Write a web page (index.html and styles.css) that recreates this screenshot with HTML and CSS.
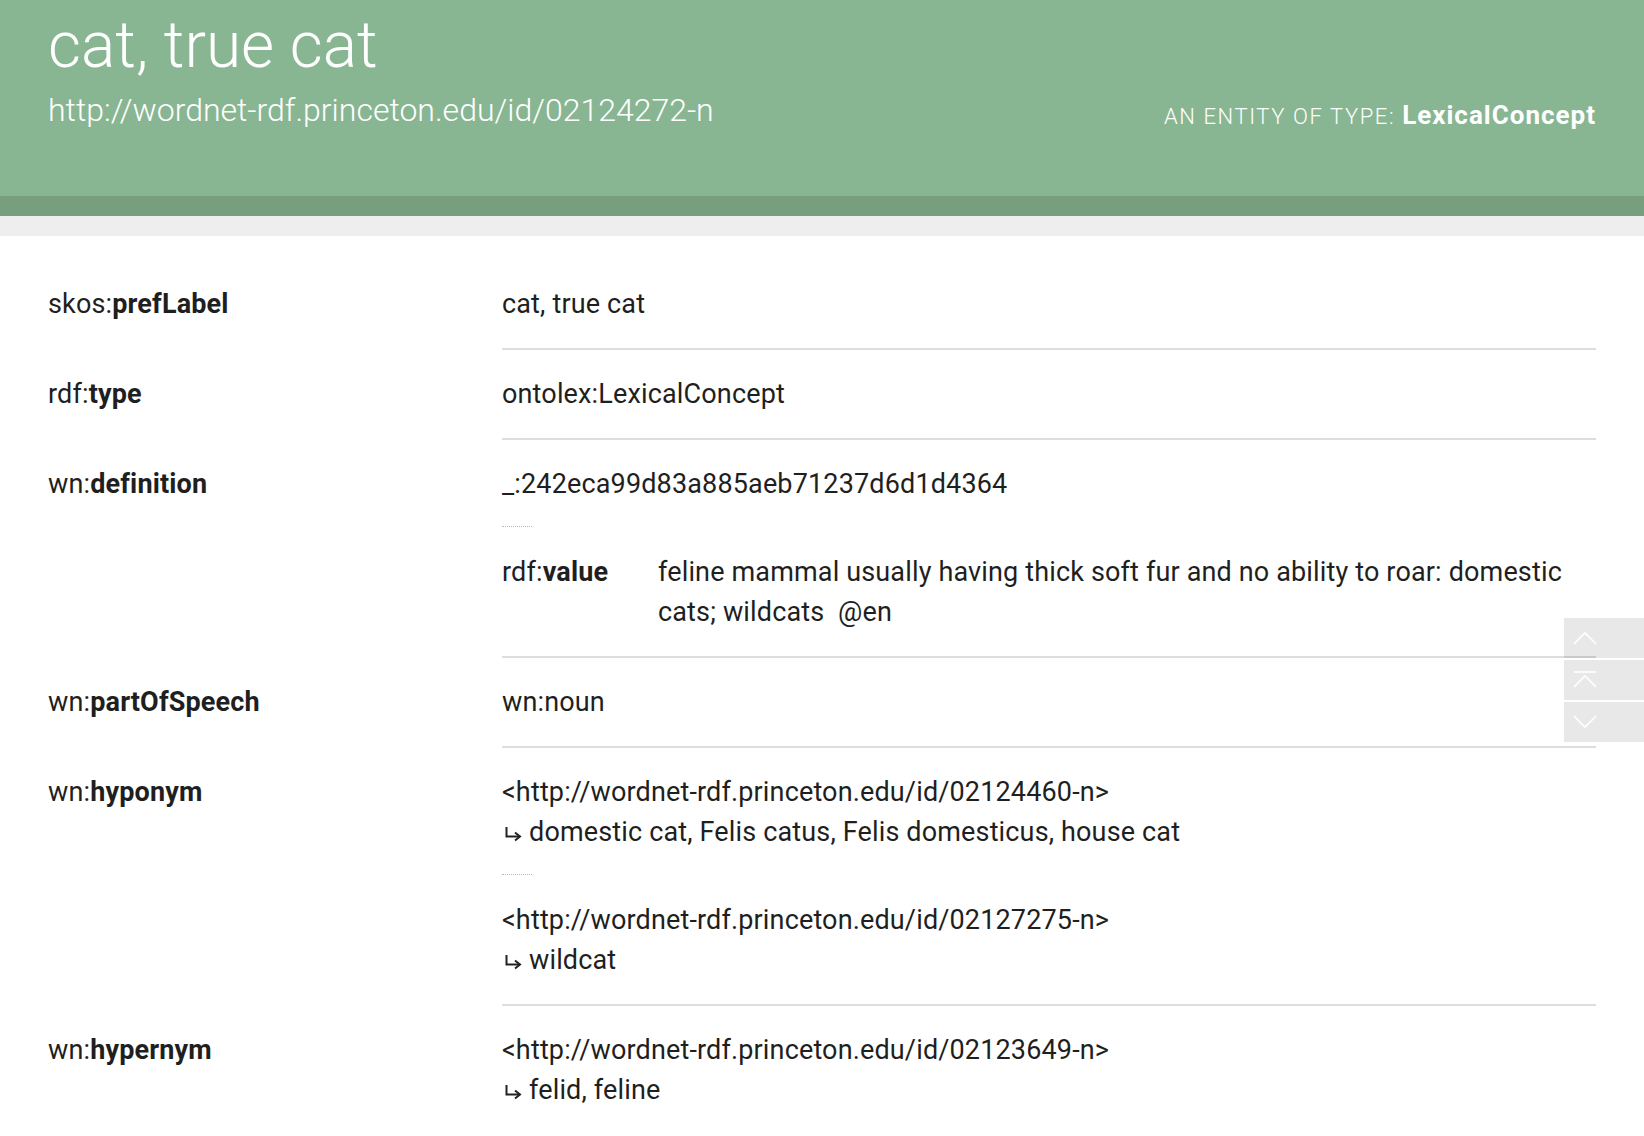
FILE: index.html
```html
<!DOCTYPE html>
<html lang="en">
<head>
<meta charset="utf-8">
<title>cat, true cat</title>
<link rel="stylesheet" href="styles.css">
</head>
<body>
<header class="page-header">
  <h1 class="title">cat, true cat</h1>
  <div class="subline">
    <div class="uri">http://wordnet-rdf.princeton.edu/id/02124272-n</div>
    <div class="entity-type">AN ENTITY OF TYPE: <strong>LexicalConcept</strong></div>
  </div>
</header>
<div class="band-dark"></div>
<div class="band-gray"></div>

<main class="content">
  <div class="row">
    <div class="prop">skos:<b>prefLabel</b></div>
    <div class="vals"><div class="val">cat, true cat</div></div>
  </div>
  <div class="row">
    <div class="prop">rdf:<b>type</b></div>
    <div class="vals"><div class="val">ontolex:LexicalConcept</div></div>
  </div>
  <div class="row">
    <div class="prop">wn:<b>definition</b></div>
    <div class="vals">
      <div class="val">_:242eca99d83a885aeb71237d6d1d4364</div>
      <div class="sep"></div>
      <div class="nested">
        <div class="nprop">rdf:<b>value</b></div>
        <div class="nval">feline mammal usually having thick soft fur and no ability to roar: domestic cats; wildcats&nbsp; @en</div>
      </div>
    </div>
  </div>
  <div class="row">
    <div class="prop">wn:<b>partOfSpeech</b></div>
    <div class="vals"><div class="val">wn:noun</div></div>
  </div>
  <div class="row">
    <div class="prop">wn:<b>hyponym</b></div>
    <div class="vals">
      <div class="val">&lt;http://wordnet-rdf.princeton.edu/id/02124460-n&gt;</div>
      <div class="val"><svg class="arrow" width="18" height="16" viewBox="0 0 18 16"><path d="M2.5 1 V10.5 H15" fill="none" stroke="#222" stroke-width="2"/><path d="M11 6.5 L16 10.5 L11 14.5" fill="none" stroke="#222" stroke-width="2"/></svg>domestic cat, Felis catus, Felis domesticus, house cat</div>
      <div class="sep"></div>
      <div class="val">&lt;http://wordnet-rdf.princeton.edu/id/02127275-n&gt;</div>
      <div class="val"><svg class="arrow" width="18" height="16" viewBox="0 0 18 16"><path d="M2.5 1 V10.5 H15" fill="none" stroke="#222" stroke-width="2"/><path d="M11 6.5 L16 10.5 L11 14.5" fill="none" stroke="#222" stroke-width="2"/></svg>wildcat</div>
    </div>
  </div>
  <div class="row">
    <div class="prop">wn:<b>hypernym</b></div>
    <div class="vals">
      <div class="val">&lt;http://wordnet-rdf.princeton.edu/id/02123649-n&gt;</div>
      <div class="val"><svg class="arrow" width="18" height="16" viewBox="0 0 18 16"><path d="M2.5 1 V10.5 H15" fill="none" stroke="#222" stroke-width="2"/><path d="M11 6.5 L16 10.5 L11 14.5" fill="none" stroke="#222" stroke-width="2"/></svg>felid, feline</div>
    </div>
  </div>
</main>

<nav class="scroller">
  <a class="sbtn" href="#" aria-label="Previous">
    <svg width="24" height="14" viewBox="0 0 24 14"><polyline points="1,13 12,2 23,13" fill="none" stroke="#fff" stroke-width="1.6"/></svg>
  </a>
  <a class="sbtn" href="#" aria-label="Top">
    <svg width="24" height="18" viewBox="0 0 24 18"><line x1="1" y1="1" x2="23" y2="1" stroke="#fff" stroke-width="1.6"/><polyline points="1,16 12,5 23,16" fill="none" stroke="#fff" stroke-width="1.6"/></svg>
  </a>
  <a class="sbtn" href="#" aria-label="Next">
    <svg width="24" height="14" viewBox="0 0 24 14"><polyline points="1,1 12,12 23,1" fill="none" stroke="#fff" stroke-width="1.6"/></svg>
  </a>
</nav>
</body>
</html>
```

FILE: styles.css
```css
html, body {
  margin: 0;
  padding: 0;
  background: #ffffff;
}
body {
  font-family: Roboto, "Liberation Sans", sans-serif;
  color: #1f1f1f;
}
.page-header {
  background: #89b692;
  color: #ffffff;
  height: 196px;
  box-sizing: border-box;
  padding: 6px 48px 0 48px;
}
.title {
  margin: 0;
  font-weight: 300;
  font-size: 64px;
  line-height: 80px;
}
.subline {
  display: flex;
  justify-content: space-between;
  align-items: baseline;
  padding-top: 2px;
}
.uri {
  font-weight: 300;
  font-size: 32px;
  line-height: 44px;
}
.entity-type {
  font-weight: 300;
  font-size: 22px;
  letter-spacing: 1.6px;
  position: relative;
  top: 3px;
}
.entity-type strong {
  font-weight: 700;
  font-size: 26px;
  letter-spacing: 1px;
}
.band-dark {
  height: 20px;
  background: #779f7f;
}
.band-gray {
  height: 20px;
  background: #eeeeee;
}
.content {
  padding: 24px 48px 0 48px;
  font-size: 27px;
  letter-spacing: 0.15px;
  line-height: 40px;
}
.row {
  display: flex;
}
.prop {
  width: 454px;
  flex: none;
  padding: 24px 0;
}
.prop b, .nprop b {
  font-weight: 700;
}
.vals {
  flex: 1;
  padding: 24px 0;
  border-bottom: 2px solid #dddddd;
}
.row:last-child .vals {
  border-bottom: none;
}
.sep {
  width: 30px;
  border-top: 1px dotted #b8b8b8;
  margin: 22px 0 25px 0;
}
.nested {
  display: flex;
}
.nprop {
  width: 156px;
  flex: none;
}
.nval {
  flex: 1;
}
.arrow {
  vertical-align: -1px;
  margin: 0 7px 0 2px;
}
.scroller {
  position: fixed;
  right: 0;
  top: 618px;
  display: flex;
  flex-direction: column;
  gap: 2px;
}
.sbtn {
  display: flex;
  align-items: center;
  justify-content: flex-start;
  width: 80px;
  height: 40px;
  box-sizing: border-box;
  padding-left: 9px;
  background: rgba(0, 0, 0, 0.09);
}
```
